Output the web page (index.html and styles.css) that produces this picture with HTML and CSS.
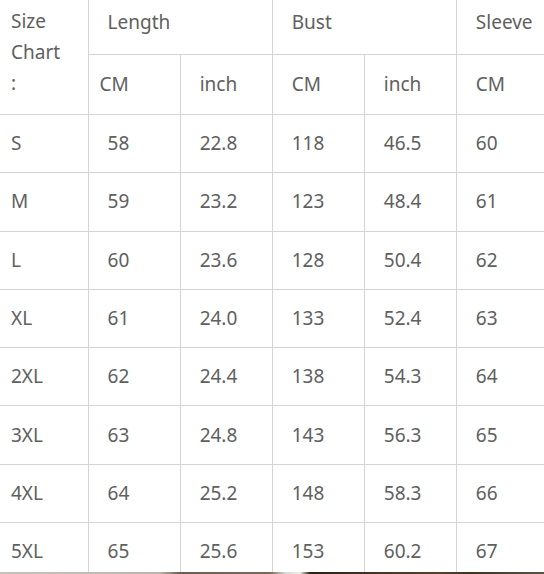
FILE: index.html
```html
<!DOCTYPE html>
<html lang="en">
<head>
<meta charset="utf-8">
<title>Size Chart</title>
<link rel="stylesheet" href="styles.css">
</head>
<body>
<div class="crop">
  <table class="chart">
    <colgroup>
      <col class="c-first">
      <col class="c"><col class="c"><col class="c"><col class="c"><col class="c"><col class="c">
    </colgroup>
    <thead>
      <tr class="h1">
        <th rowspan="2" class="label">Size<br>Chart<br>:</th>
        <th colspan="2">Length</th>
        <th colspan="2">Bust</th>
        <th colspan="2">Sleeve</th>
      </tr>
      <tr class="h2">
        <th>CM</th><th>inch</th><th>CM</th><th>inch</th><th>CM</th><th></th>
      </tr>
    </thead>
    <tbody>
      <tr><td>S</td><td>58</td><td>22.8</td><td>118</td><td>46.5</td><td>60</td><td></td></tr>
      <tr><td>M</td><td>59</td><td>23.2</td><td>123</td><td>48.4</td><td>61</td><td></td></tr>
      <tr><td>L</td><td>60</td><td>23.6</td><td>128</td><td>50.4</td><td>62</td><td></td></tr>
      <tr><td>XL</td><td>61</td><td>24.0</td><td>133</td><td>52.4</td><td>63</td><td></td></tr>
      <tr><td>2XL</td><td>62</td><td>24.4</td><td>138</td><td>54.3</td><td>64</td><td></td></tr>
      <tr><td>3XL</td><td>63</td><td>24.8</td><td>143</td><td>56.3</td><td>65</td><td></td></tr>
      <tr><td>4XL</td><td>64</td><td>25.2</td><td>148</td><td>58.3</td><td>66</td><td></td></tr>
      <tr><td>5XL</td><td>65</td><td>25.6</td><td>153</td><td>60.2</td><td>67</td><td></td></tr>
    </tbody>
  </table>
</div>
<div class="strip"></div>
</body>
</html>
```
FILE: styles.css
```css
html, body {
  margin: 0;
  padding: 0;
  background: #ffffff;
  overflow: hidden;
}

.crop {
  height: 572px;
  overflow: hidden;
}

.chart {
  border-collapse: collapse;
  table-layout: fixed;
  width: 641px;
  font-family: "Noto Sans", "Open Sans", sans-serif;
  font-size: 19px;
  color: #606060;
}

.c-first { width: 88px; }
.c { width: 92px; }

.chart th,
.chart td {
  border: 1px solid #d4d4d4;
  text-align: left;
  font-weight: normal;
  padding: 0 0 0 19px;
  vertical-align: middle;
  line-height: 31px;
}

.chart tr > :first-child {
  padding-left: 11px;
  border-left: none;
}

.chart thead tr.h1 > * {
  border-top: none;
  height: 45px;
  padding-bottom: 9px;
}

.chart thead tr.h2 > * {
  height: 59px;
}

.chart tbody td {
  height: 57.3px;
}

.strip {
  height: 2px;
  background: linear-gradient(to right, #c9c2b8 0px, #bdb5aa 160px, #6e5d4c 180px, #7a6a58 270px, #d8d6d2 285px, #f0eeec 300px, #2c1f14 310px, #4a3522 380px, #5a4129 440px, #3e3324 470px, #5b5340 544px);
}
```
